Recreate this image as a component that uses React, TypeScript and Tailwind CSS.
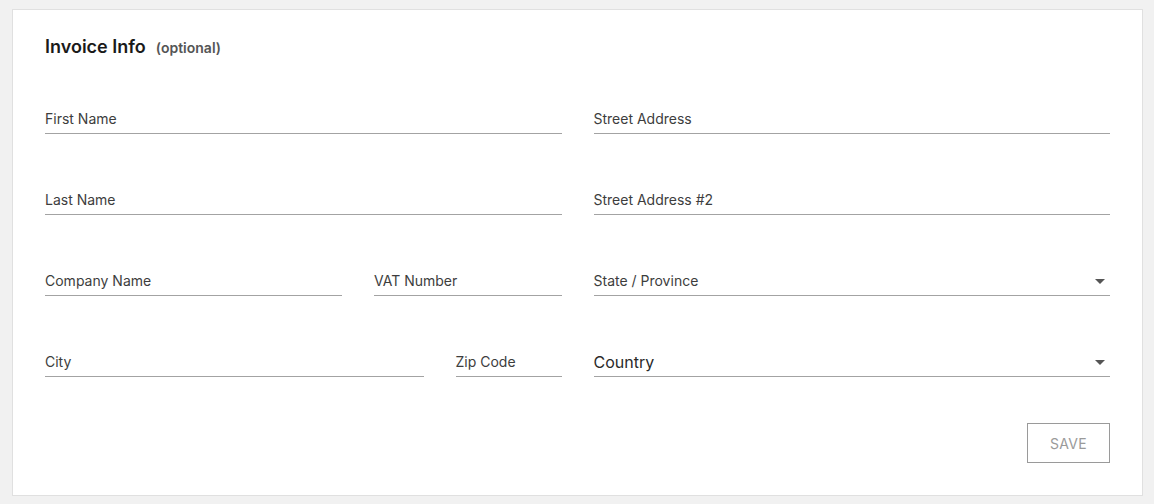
import type { ReactNode } from 'react'

function Caret() {
  return (
    <svg width="10" height="5" viewBox="0 0 10 5" className="shrink-0">
      <path d="M0 0h10L5 5z" fill="#555" />
    </svg>
  )
}

function Field({ label, select = false, value }: { label?: string; select?: boolean; value?: ReactNode }) {
  return (
    <div className="flex items-center h-[25px] pb-1 border-b border-[#a3a3a3]">
      {value ? (
        <span className="flex-1 text-[16px] leading-5 text-[#2a2a2a]">{value}</span>
      ) : (
        <span className="flex-1 text-[14px] leading-5 text-[#3d3d3d]">{label}</span>
      )}
      {select && <span className="mr-[5px]"><Caret /></span>}
    </div>
  )
}

export default function App() {
  return (
    <div className="min-h-screen bg-[#f1f1f1] pt-[9px] pl-3" style={{ fontFamily: 'Inter, "Noto Sans", sans-serif' }}>
      <div className="w-[1131px] h-[487px] bg-white border border-[#e0e0e0] px-8 pt-[25px] pb-8 flex flex-col">
        <div className="flex items-baseline gap-[10px] h-6">
          <h2 className="text-[18px] leading-6 font-semibold text-[#1a1a1a]">Invoice Info</h2>
          <span className="text-[14px] font-semibold text-[#555]">(optional)</span>
        </div>

        <div className="mt-[50px] grid grid-cols-2 gap-x-8 gap-y-[56px]">
          <Field label="First Name" />
          <Field label="Street Address" />
          <Field label="Last Name" />
          <Field label="Street Address #2" />
          <div className="grid grid-cols-[297px_1fr] gap-x-8">
            <Field label="Company Name" />
            <Field label="VAT Number" />
          </div>
          <Field label="State / Province" select />
          <div className="grid grid-cols-[1fr_106px] gap-x-8">
            <Field label="City" />
            <Field label="Zip Code" />
          </div>
          <Field value="Country" select />
        </div>

        <div className="mt-[46px] flex justify-end">
          <button className="w-[83px] h-[40px] border border-[#9a9a9a] text-[14px] text-[#9a9a9a] tracking-wide">
            SAVE
          </button>
        </div>
      </div>
    </div>
  )
}
